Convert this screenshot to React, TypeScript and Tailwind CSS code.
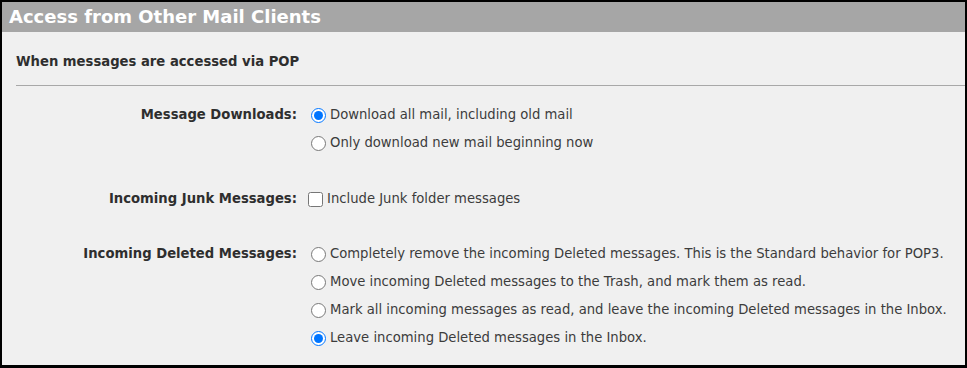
import React from "react";

const font = { fontFamily: '"DejaVu Sans", Verdana, sans-serif' };

function Radio({ checked, label }: { checked?: boolean; label: string }) {
  return (
    <label className="flex items-center h-[28px] text-[13.2px] text-[#3c3c3c]">
      <input
        type="radio"
        defaultChecked={checked}
        className="m-0 ml-[14px] mr-[4px] w-[15px] h-[15px] accent-[#0075ff]"
        readOnly
      />
      <span>{label}</span>
    </label>
  );
}

function Row({ label, children }: { label: string; children: React.ReactNode }) {
  return (
    <div className="flex">
      <div className="w-[295px] shrink-0 text-right font-bold text-[13.2px] text-[#2e2e2e] h-[28px] leading-[28px]">
        {label}
      </div>
      <div className="flex flex-col">{children}</div>
    </div>
  );
}

export default function App() {
  return (
    <div
      className="w-[967px] h-[368px] border-l-2 border-t-2 border-r-2 border-b-[3px] border-black bg-[#f0f0f0] overflow-hidden"
      style={font}
    >
      <div className="h-[30px] bg-[#a6a6a6] text-white font-bold text-[18px] leading-[30px] pl-[7px]">
        Access from Other Mail Clients
      </div>
      <div className="pl-[14px] pt-[20px] h-[53px] font-bold text-[13.2px] text-[#2e2e2e] leading-[20px]">
        When messages are accessed via POP
      </div>
      <div className="ml-[14px] h-px bg-[#a8a8a8]" />
      <div className="pt-[15px] flex flex-col">
        <Row label="Message Downloads:">
          <Radio checked label="Download all mail, including old mail" />
          <Radio label="Only download new mail beginning now" />
        </Row>
        <div className="h-[28px]" />
        <Row label="Incoming Junk Messages:">
          <label className="flex items-center h-[28px] text-[13.2px] text-[#3c3c3c]">
            <input type="checkbox" className="m-0 ml-[11px] mr-[4px] w-[15px] h-[15px]" />
            <span>Include Junk folder messages</span>
          </label>
        </Row>
        <div className="h-[27px]" />
        <Row label="Incoming Deleted Messages:">
          <Radio label="Completely remove the incoming Deleted messages. This is the Standard behavior for POP3." />
          <Radio label="Move incoming Deleted messages to the Trash, and mark them as read." />
          <Radio label="Mark all incoming messages as read, and leave the incoming Deleted messages in the Inbox." />
          <Radio checked label="Leave incoming Deleted messages in the Inbox." />
        </Row>
      </div>
    </div>
  );
}
